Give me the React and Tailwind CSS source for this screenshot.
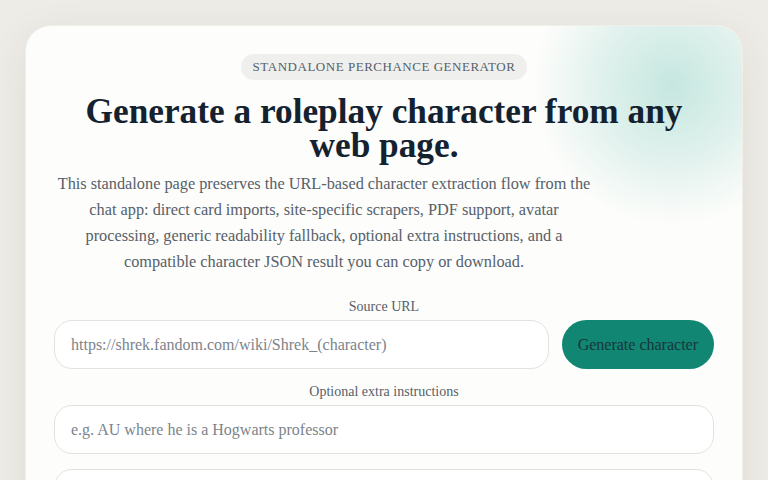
import React from 'react';

function App() {
  return (
    <div className="min-h-screen bg-[#eeece7] px-[25px] pt-[25px] font-['Liberation_Serif',serif]">
      <main className="relative overflow-hidden rounded-[26px] bg-[#fdfdfb] px-[28px] pt-[28px] pb-10 shadow-[0_10px_40px_rgba(60,50,30,0.08)] border border-[#f0efea]">
        <div className="pointer-events-none absolute -right-[70px] -top-[80px] h-[280px] w-[280px] rounded-full bg-[radial-gradient(circle,rgba(120,200,185,0.42)_0%,rgba(150,210,200,0.25)_40%,rgba(255,255,255,0)_70%)]" />
        <div className="relative flex flex-col items-center">
          <span className="rounded-full bg-[#efefed] px-3 py-[5px] text-[13px] uppercase leading-4 tracking-[0.04em] text-[#56616b]">
            Standalone Perchance Generator
          </span>
          <h1 className="mt-[15px] text-center text-[35.3px] font-bold leading-[34px] text-[#142230]">
            Generate a roleplay character from any web page.
          </h1>
        </div>
        <p className="relative mt-[8px] max-w-[540px] text-center text-[16.3px] leading-[26px] text-[#56606a]">
          This standalone page preserves the URL-based character extraction flow from the chat app: direct card imports, site-specific scrapers, PDF support, avatar processing, generic readability fallback, optional extra instructions, and a compatible character JSON result you can copy or download.
        </p>
        <form className="relative mt-[22px] flex flex-col">
          <label className="text-center text-[14px] leading-5 text-[#56606a]">Source URL</label>
          <div className="mt-[3px] flex gap-[13px]">
            <input
              className="h-[49px] flex-1 rounded-[18px] border border-[#e2e2de] bg-white px-4 text-[16px] text-[#2a333b] placeholder:text-[#7c848b] outline-none"
              placeholder="https://shrek.fandom.com/wiki/Shrek_(character)"
            />
            <button
              type="button"
              className="h-[49px] rounded-full bg-[#118672] px-4 text-[16px] text-[#17363a]"
            >
              Generate character
            </button>
          </div>
          <label className="mt-[13px] text-center text-[14px] leading-5 text-[#56606a]">Optional extra instructions</label>
          <input
            className="mt-[3px] h-[49px] rounded-[18px] border border-[#e2e2de] bg-white px-4 text-[16px] placeholder:text-[#7c848b] outline-none"
            placeholder="e.g. AU where he is a Hogwarts professor"
          />
          <div className="mt-[15px] h-[49px] rounded-[18px] border border-[#e2e2de] bg-white" />
        </form>
      </main>
    </div>
  );
}

export default App;
